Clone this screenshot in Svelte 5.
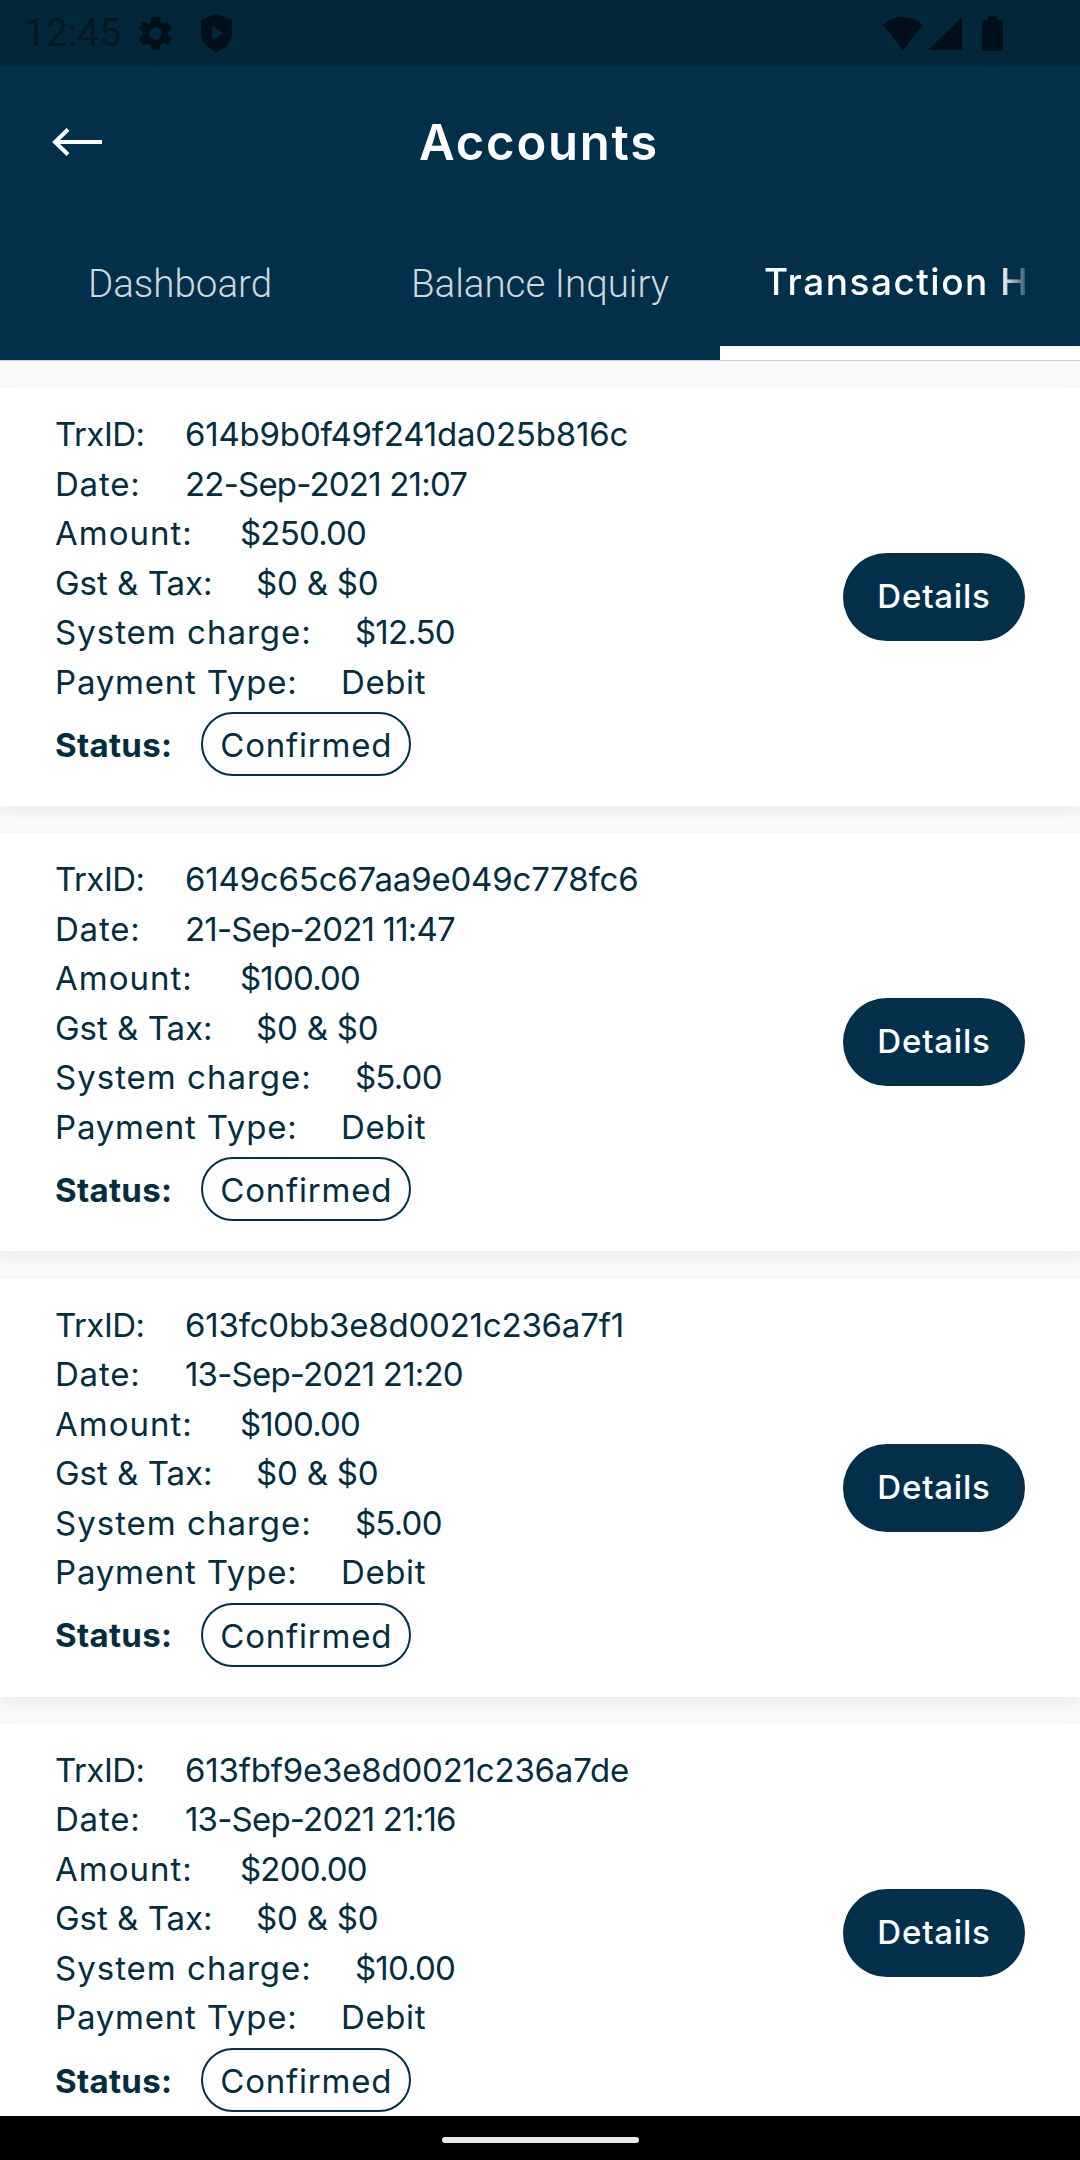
<script>
  const tabs = ['Dashboard', 'Balance Inquiry', 'Transaction History'];

  const transactions = [
    { id: '614b9b0f49f241da025b816c', date: '22-Sep-2021 21:07', amount: '$250.00', charge: '$12.50' },
    { id: '6149c65c67aa9e049c778fc6', date: '21-Sep-2021 11:47', amount: '$100.00', charge: '$5.00' },
    { id: '613fc0bb3e8d0021c236a7f1', date: '13-Sep-2021 21:20', amount: '$100.00', charge: '$5.00' },
    { id: '613fbf9e3e8d0021c236a7de', date: '13-Sep-2021 21:16', amount: '$200.00', charge: '$10.00' }
  ];
</script>

<div class="screen">
  <div class="status-bar">
    <span class="clock">12:45</span>
    <svg class="status-icon gear" viewBox="2.500 2 19 20" width="33" height="35">
      <path d="M19.14 12.94c.04-.3.06-.61.06-.94 0-.32-.02-.64-.07-.94l2.03-1.58a.49.49 0 0 0 .12-.61l-1.92-3.32a.49.49 0 0 0-.59-.22l-2.39.96a7 7 0 0 0-1.62-.94l-.36-2.54a.48.48 0 0 0-.48-.41h-3.84a.48.48 0 0 0-.47.41l-.36 2.54c-.59.24-1.13.57-1.62.94l-2.39-.96a.48.48 0 0 0-.59.22L2.74 8.870a.48.48 0 0 0 .12.61l2.030 1.58c-.05.3-.09.63-.09.94s.02.64.07.94l-2.030 1.58a.49.49 0 0 0-.12.61l1.920 3.320c.12.22.37.29.59.22l2.390-.96c.5.38 1.030.7 1.620.94l.36 2.540c.05.24.24.41.48.41h3.840c.24 0 .44-.17.47-.41l.36-2.540c.59-.24 1.130-.56 1.620-.94l2.390.96c.22.08.47 0 .59-.22l1.920-3.320a.48.48 0 0 0-.12-.61l-2.010-1.580zM12 15.600A3.600 3.600 0 1 1 12 8.400a3.600 3.600 0 0 1 0 7.200z" />
    </svg>
    <svg class="status-icon shield" viewBox="0 0 31 38" width="31" height="38">
      <path d="M15.500 0 31 6V19c0 9-6.500 15.500-15.500 19C6.500 34.500 0 28 0 19V6zM11 12v14l12-7z" fill-rule="evenodd" />
    </svg>
    <div class="status-right">
      <svg viewBox="0 0 40 33" width="40" height="33" class="status-icon">
        <path d="M20 33 0 8C5 3 12 0 20 0s15 3 20 8z" />
      </svg>
      <svg viewBox="0 0 34 33" width="34" height="33" class="status-icon signal">
        <path d="M34 0v33H0z" />
      </svg>
      <svg viewBox="0 0 21 35" width="21" height="35" class="status-icon battery">
        <path d="M6 0h9v4h4c1 0 2 1 2 2v27c0 1-1 2-2 2H2c-1 0-2-1-2-2V6c0-1 1-2 2-2h4z" />
      </svg>
    </div>
  </div>

  <header class="app-bar">
    <div class="title-row">
      <button class="back" aria-label="Back">
        <svg viewBox="0 0 50 30" width="50" height="30" fill="none" stroke="#fff" stroke-width="4">
          <path d="M50 15H4M16 2.500 3 15l13 12.500" />
        </svg>
      </button>
      <h1>Accounts</h1>
    </div>
    <nav class="tabs">
      {#each tabs as tab, i}
        <div class="tab" class:active={i === 2}><span>{tab}</span></div>
      {/each}
    </nav>
  </header>

  <main class="list">
    {#each transactions as trx}
      <article class="card">
        <div class="info">
          <div class="line"><span class="label trx">TrxID:</span><span>{trx.id}</span></div>
          <div class="line"><span class="label date">Date:</span><span class="num">{trx.date}</span></div>
          <div class="line"><span class="label amount">Amount:</span><span class="num">{trx.amount}</span></div>
          <div class="line"><span class="label gst">Gst &amp; Tax:</span><span>$0 &amp; $0</span></div>
          <div class="line"><span class="label charge">System charge:</span><span class="num">{trx.charge}</span></div>
          <div class="line"><span class="label type">Payment Type:</span><span class="text">Debit</span></div>
          <div class="status">
            <strong>Status:</strong>
            <span class="chip">Confirmed</span>
          </div>
        </div>
        <button class="details">Details</button>
      </article>
    {/each}
  </main>

  <div class="nav-bar"><div class="home"></div></div>
</div>

<style>
  :global(body) {
    margin: 0;
    background: #fafafa;
  }

  .screen {
    position: relative;
    width: 1080px;
    height: 2160px;
    overflow: hidden;
    background: #f9f9f9;
    font-family: Inter, "Noto Sans", sans-serif;
    color: #032e3f;
  }

  .status-bar {
    height: 66px;
    display: flex;
    align-items: center;
    padding: 0 77px 0 24px;
    background: #02273a;
    color: #011722;
    box-sizing: border-box;
  }

  .clock {
    font-family: Roboto, sans-serif;
    font-size: 39px;
    width: 115px;
    flex: none;
  }

  .status-icon {
    fill: #011018;
    flex: none;
  }

  .shield {
    margin-left: 29px;
  }

  .status-right {
    margin-left: auto;
    display: flex;
    align-items: center;
  }

  .signal {
    margin-left: 5px;
  }

  .battery {
    margin-left: 20px;
  }

  .app-bar {
    background: #02304b;
    height: 294px;
    border-bottom: 1px solid #cdd5dc;
    box-sizing: content-box;
  }

  .title-row {
    height: 152px;
    display: flex;
    align-items: center;
    justify-content: center;
    position: relative;
  }

  .back {
    position: absolute;
    left: 52px;
    top: 61px;
    padding: 0;
    border: 0;
    background: none;
    line-height: 0;
  }

  h1 {
    margin: 0;
    position: relative;
    left: -1px;
    font-size: 49px;
    font-weight: 600;
    letter-spacing: 1.800px;
    color: #fff;
  }

  .tabs {
    display: grid;
    grid-template-columns: 360px 360px 360px;
    height: 142px;
  }

  .tab {
    display: flex;
    justify-content: center;
    padding-top: 43px;
    box-sizing: border-box;
    font-family: Roboto, sans-serif;
    font-weight: 300;
    font-size: 38.500px;
    color: #cfd8df;
  }

  .tab.active {
    justify-content: flex-start;
    padding-left: 44px;
    padding-top: 41px;
    border-bottom: 14px solid #fff;
    font-family: Inter, sans-serif;
    font-weight: 500;
    font-size: 37px;
    letter-spacing: 1.500px;
    color: #fff;
    overflow: hidden;
  }

  .tab.active span {
    white-space: nowrap;
    width: 269px;
    overflow: hidden;
    -webkit-mask-image: linear-gradient(90deg, #000 88%, transparent);
    mask-image: linear-gradient(90deg, #000 88%, transparent);
  }

  .list {
    display: flex;
    flex-direction: column;
    gap: 27.300px;
    padding-top: 27px;
  }

  .card {
    height: 418px;
    flex: none;
    background: #fff;
    display: flex;
    align-items: center;
    justify-content: space-between;
    padding: 0 55px;
    box-shadow: 0 6px 14px rgba(0, 0, 0, 0.05);
  }

  .info {
    align-self: flex-start;
    padding-top: 22px;
    font-size: 33px;
    line-height: 49.500px;
    letter-spacing: -0.200px;
  }

  .line {
    display: flex;
    white-space: nowrap;
  }

  .label {
    flex: none;
    letter-spacing: 0.800px;
  }

  /* value column differs per row, Inter runs narrower than the original face */
  .label.trx {
    width: 130px;
    letter-spacing: -0.500px;
  }

  .label.date {
    width: 130px;
  }

  .label.amount {
    width: 185px;
    letter-spacing: 1px;
  }

  .label.gst {
    width: 201px;
    letter-spacing: 0;
  }

  .label.charge {
    width: 300px;
    letter-spacing: 1px;
  }

  .label.type {
    width: 286px;
  }

  .num {
    letter-spacing: -0.800px;
  }

  .text {
    letter-spacing: 0.600px;
  }

  .status {
    display: flex;
    align-items: center;
    gap: 29px;
    margin-top: 5px;
  }

  .status strong {
    padding-top: 3px;
    font-weight: 700;
    letter-spacing: 0.300px;
  }

  .chip {
    height: 64px;
    box-sizing: border-box;
    line-height: 62px;
    padding: 0 17px;
    border: 2px solid #02304b;
    border-radius: 32px;
    letter-spacing: 0.800px;
  }

  .details {
    width: 182px;
    height: 88px;
    padding: 0 0 2px;
    border: 0;
    border-radius: 44px;
    background: #02304b;
    color: #fff;
    font-family: Inter, sans-serif;
    font-size: 33px;
    font-weight: 500;
    letter-spacing: 0.800px;
  }

  .nav-bar {
    position: absolute;
    left: 0;
    right: 0;
    bottom: 0;
    height: 44px;
    background: #000;
    display: flex;
    justify-content: center;
    padding-top: 21px;
    box-sizing: border-box;
  }

  .home {
    width: 197px;
    height: 6px;
    border-radius: 3px;
    background: #e8e8e8;
  }
</style>
